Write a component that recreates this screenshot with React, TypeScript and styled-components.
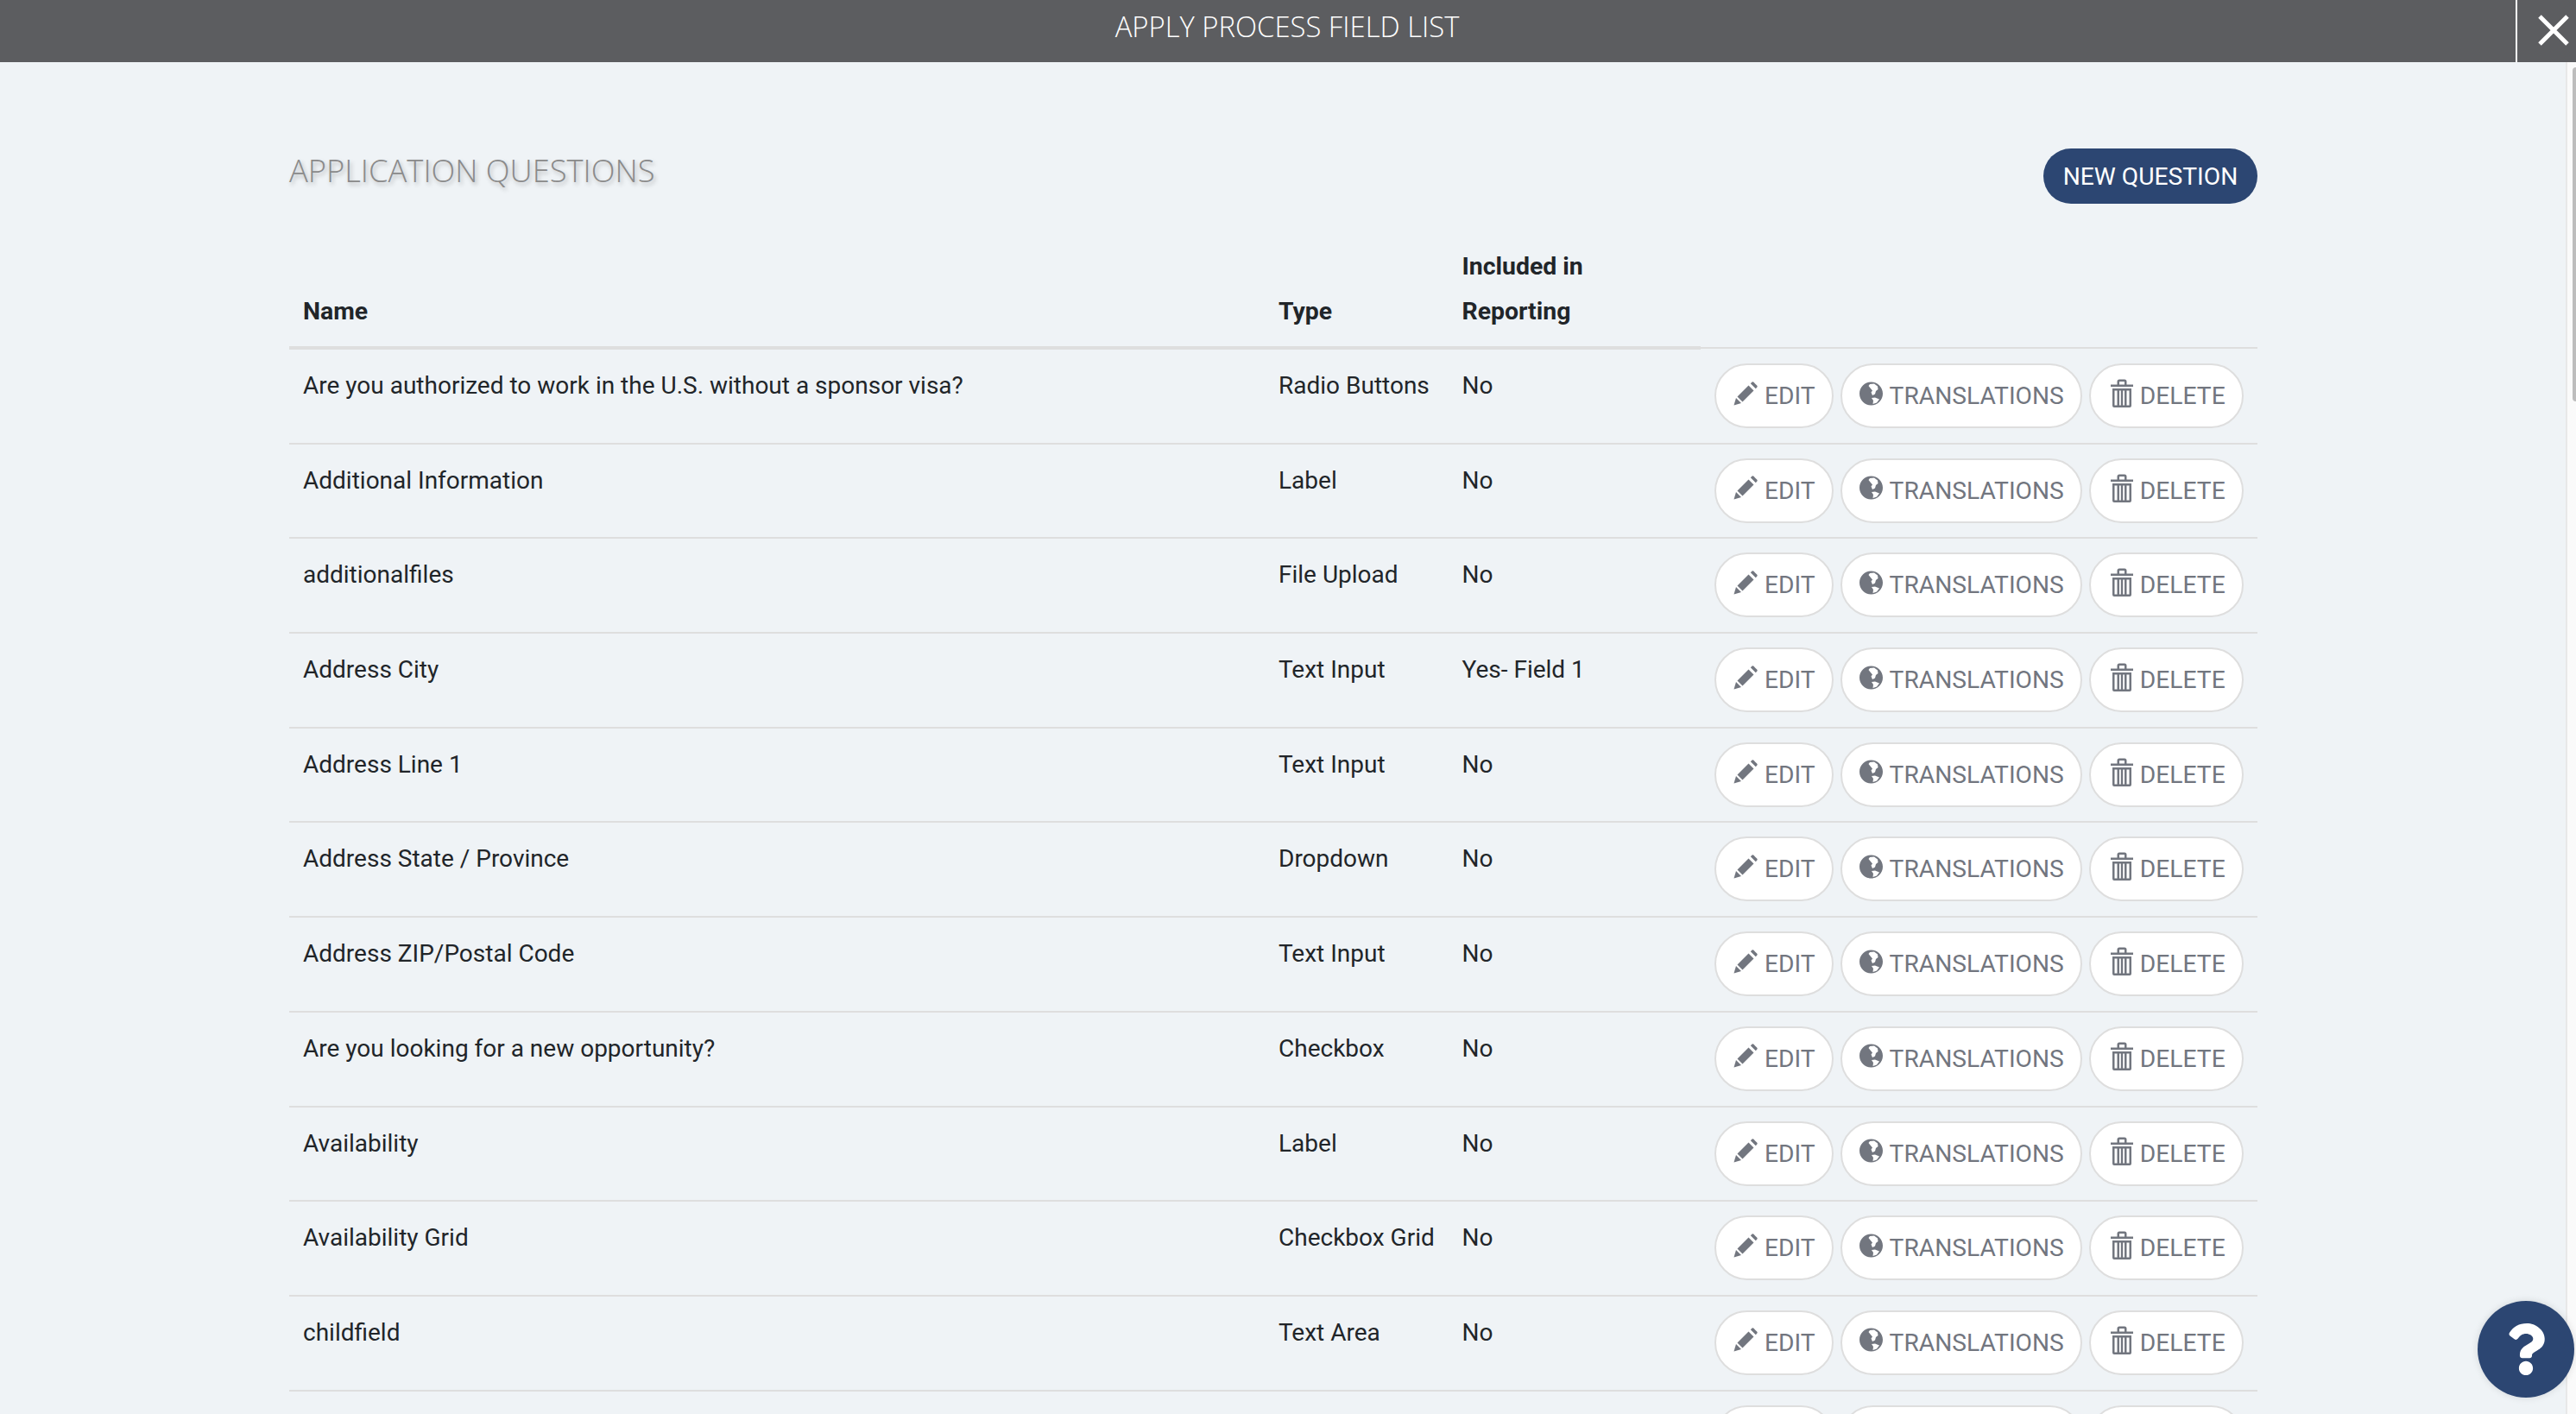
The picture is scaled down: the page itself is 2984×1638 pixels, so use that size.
import React from 'react';
import styled, { createGlobalStyle } from 'styled-components';
import { FaQuestion } from 'react-icons/fa';

const GlobalStyle = createGlobalStyle`
  html, body {
    margin: 0;
    height: 100%;
    overflow: hidden;
    background: #eff3f6;
    font-family: Roboto, "Liberation Sans", sans-serif;
    color: #212529;
  }
  #root {
    height: 100%;
  }
`;

const Page = styled.div`
  display: flex;
  flex-direction: column;
  height: 100vh;
  overflow: hidden;
`;

const TopBar = styled.header`
  display: grid;
  grid-template-columns: 70px 1fr 70px;
  flex: 0 0 72px;
  background: #5c5d60;
`;

const TopTitle = styled.h1`
  grid-column: 2;
  margin: 0;
  padding-right: 2px;
  text-align: center;
  font: 300 32.8px/61px "Open Sans", sans-serif;
  color: #fff;
`;

const CloseButton = styled.button`
  grid-column: 3;
  display: flex;
  justify-content: flex-end;
  align-items: flex-start;
  padding: 17px 8px 0 0;
  border: 0;
  border-left: 2px solid #fff;
  background: transparent;
  cursor: pointer;
`;

const Body = styled.div`
  flex: 1;
  display: flex;
  min-height: 0;
`;

const Main = styled.main`
  flex: 1;
  min-width: 0;
  padding: 100px 357px 0 335px;
  overflow: hidden;
`;

const ScrollTrack = styled.div`
  flex: 0 0 12px;
  box-sizing: border-box;
  padding: 6px 0 0 6px;
  background: #fafafa;
  border-left: 2px solid #e8e8e8;
`;

const ScrollThumb = styled.div`
  height: 387px;
  background: #bdbdbd;
  border-radius: 6px 0 0 6px;
`;

const TitleRow = styled.div`
  display: flex;
  justify-content: space-between;
  align-items: flex-start;
  height: 64px;
  margin-bottom: 47px;
`;

const SectionTitle = styled.h2`
  margin: 0;
  font: 300 36.3px/50px "Open Sans", sans-serif;
  color: #8a8a8a;
  text-shadow: 2px 3px 5px rgba(0, 0, 0, 0.25);
`;

const NewButton = styled.button`
  width: 248px;
  height: 64px;
  border: 0;
  border-radius: 32px;
  background: #2c4672;
  color: #fff;
  font: 400 28.2px Roboto, sans-serif;
  cursor: pointer;
`;

const Columns = styled.div`
  display: grid;
  grid-template-columns: 1130px 212.5px 292.5px 1fr;
`;

const HeadRow = styled(Columns)`
  align-items: stretch;
`;

const HeadCell = styled.div`
  display: flex;
  align-items: flex-end;
  padding: 0 16px 14px;
  border-bottom: 4px solid #dedede;
  font: 700 28.4px/52px Roboto, sans-serif;
  color: #212529;
`;

const HeadActions = styled.div`
  align-self: end;
  height: 0;
  margin-bottom: 1px;
  border-bottom: 2px solid #dedede;
`;

const Row = styled(Columns)`
  box-sizing: border-box;
  height: 109.7px;
  border-bottom: 2px solid #dedede;
`;

const Cell = styled.div`
  padding: 21px 16px 0;
  font: 400 28px/42px Roboto, sans-serif;
  color: #212529;
  white-space: nowrap;
`;

const Actions = styled.div`
  display: flex;
  gap: 8px;
  padding: 16px 0 0 16px;
`;

const PillButton = styled.button`
  box-sizing: border-box;
  display: inline-flex;
  align-items: center;
  gap: 8px;
  height: 75px;
  padding: 0 19px 0 20px;
  border: 2px solid #dedede;
  border-radius: 38px;
  background: #fff;
  color: #72767f;
  font: 400 28.2px Roboto, sans-serif;
  cursor: pointer;
  svg {
    flex: none;
    margin-bottom: 6px;
    fill: #72767f;
  }
`;

const TrashSvg = styled.svg`
  margin-left: 3px;
`;

const HelpButton = styled.button`
  position: fixed;
  left: 2870px;
  top: 1507px;
  display: flex;
  align-items: center;
  justify-content: center;
  width: 112px;
  height: 112px;
  padding: 0;
  border: 0;
  border-radius: 50%;
  background: #2c4672;
  color: #fff;
  font-size: 60px;
  box-shadow: 0 0 8px rgba(0, 0, 0, 0.12);
  cursor: pointer;
`;

const PencilIcon = () => (
  <svg width="28" height="28" viewBox="0 0 28 28" aria-hidden="true">
    <path d="M0.5 27.5 L3 19 L9 25 Z" />
    <path d="M4.5 17.5 L17.5 4.5 L23.5 10.5 L10.5 23.5 Z" />
    <path d="M19.8 2.2 L21.6 0.6 Q22.4 0 23.2 0.6 L27.4 4.8 Q28 5.6 27.4 6.4 L25.8 8.2 Z" />
  </svg>
);

const GlobeIcon = () => (
  <svg width="27" height="28" viewBox="0 0 27 28" aria-hidden="true">
    <path
      fillRule="evenodd"
      d="M13.5 0.5 C21 0.5 27 6.5 27 14 C27 21.5 21 27.5 13.5 27.5 C6 27.5 0 21.5 0 14 C0 6.5 6 0.5 13.5 0.5 Z
         M12 3 L17 2.5 L21 5.5 L21.5 9 L19 11 L18 14.5 L15 16 L13.5 12.5 L15 10.5 L12.5 7.5 L10.5 5 Z
         M14 19 L18 18.5 L23 20.5 L20 24.5 L15.5 26 L16 22 Z"
    />
  </svg>
);

const TrashIcon = () => (
  <TrashSvg width="26" height="33" viewBox="0 0 26 33" aria-hidden="true">
    <path
      fillRule="evenodd"
      d="M0 6.5 H7.5 V3 Q7.5 0.5 10 0.5 H16 Q18.5 0.5 18.5 3 V6.5 H26 V9 H0 Z M10 6.5 H16 V3.6 Q16 3 15.5 3 H10.5 Q10 3 10 3.6 Z"
    />
    <path
      fillRule="evenodd"
      d="M2 11 H24 V31 Q24 33 22 33 H4 Q2 33 2 31 Z M4.5 13.5 V30.5 H7.5 V13.5 Z M10 13.5 V30.5 H11.8 V13.5 Z M14.2 13.5 V30.5 H16 V13.5 Z M18.5 13.5 V30.5 H21.5 V13.5 Z"
    />
  </TrashSvg>
);

const CloseIcon = () => (
  <svg width="36" height="36" viewBox="0 0 36 36" aria-hidden="true">
    <path d="M2 2 L34 34 M34 2 L2 34" stroke="#fff" strokeWidth="5" />
  </svg>
);

type Question = {
  name: string;
  type: string;
  reporting: string;
};

const questions: Question[] = [
  { name: 'Are you authorized to work in the U.S. without a sponsor visa?', type: 'Radio Buttons', reporting: 'No' },
  { name: 'Additional Information', type: 'Label', reporting: 'No' },
  { name: 'additionalfiles', type: 'File Upload', reporting: 'No' },
  { name: 'Address City', type: 'Text Input', reporting: 'Yes- Field 1' },
  { name: 'Address Line 1', type: 'Text Input', reporting: 'No' },
  { name: 'Address State / Province', type: 'Dropdown', reporting: 'No' },
  { name: 'Address ZIP/Postal Code', type: 'Text Input', reporting: 'No' },
  { name: 'Are you looking for a new opportunity?', type: 'Checkbox', reporting: 'No' },
  { name: 'Availability', type: 'Label', reporting: 'No' },
  { name: 'Availability Grid', type: 'Checkbox Grid', reporting: 'No' },
  { name: 'childfield', type: 'Text Area', reporting: 'No' },
  // the twelfth row is cut off by the window, only its buttons show
  { name: '', type: '', reporting: '' },
];

const App = () => (
  <Page>
    <GlobalStyle />
    <TopBar>
      <TopTitle>APPLY PROCESS FIELD LIST</TopTitle>
      <CloseButton aria-label="Close">
        <CloseIcon />
      </CloseButton>
    </TopBar>
    <Body>
      <Main>
        <TitleRow>
          <SectionTitle>APPLICATION QUESTIONS</SectionTitle>
          <NewButton>NEW QUESTION</NewButton>
        </TitleRow>
        <HeadRow>
          <HeadCell>Name</HeadCell>
          <HeadCell>Type</HeadCell>
          <HeadCell>Included in<br />Reporting</HeadCell>
          <HeadActions />
        </HeadRow>
        {questions.map((q, i) => (
          <Row key={i}>
            <Cell>{q.name}</Cell>
            <Cell>{q.type}</Cell>
            <Cell>{q.reporting}</Cell>
            <Actions>
              <PillButton><PencilIcon />EDIT</PillButton>
              <PillButton><GlobeIcon />TRANSLATIONS</PillButton>
              <PillButton><TrashIcon />DELETE</PillButton>
            </Actions>
          </Row>
        ))}
      </Main>
      <ScrollTrack>
        <ScrollThumb />
      </ScrollTrack>
    </Body>
    <HelpButton aria-label="Help">
      <FaQuestion />
    </HelpButton>
  </Page>
);

export default App;
